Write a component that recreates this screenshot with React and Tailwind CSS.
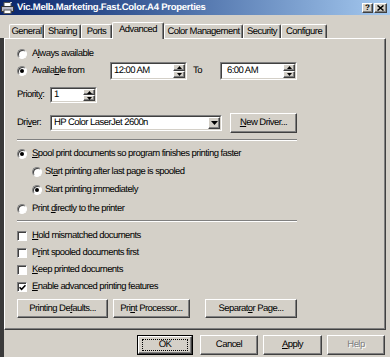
import React from "react";

// classic 3d borders
const raised =
  "border border-t-white border-l-white border-r-[#404040] border-b-[#404040] shadow-[inset_-1px_-1px_0_#808080]";

const U = ({ children }) => (
  <span className="underline decoration-1 underline-offset-[1px]">{children}</span>
);

const Button = ({ className = "", children }) => (
  <div className={`flex items-center justify-center bg-[#d4d0c8] ${raised} ${className}`}>
    {children}
  </div>
);

const Sunken = ({ className = "", children }) => (
  <div className={`border border-t-[#808080] border-l-[#808080] border-r-white border-b-white ${className}`}>
    <div className="w-full h-full border border-t-[#404040] border-l-[#404040] border-r-[#d4d0c8] border-b-[#d4d0c8] bg-white flex items-center">
      {children}
    </div>
  </div>
);

const Up = () => (
  <svg width="5" height="3" viewBox="0 0 5 3">
    <path d="M2.5 0 5 3H0z" fill="#000" />
  </svg>
);
const Down = () => (
  <svg width="5" height="3" viewBox="0 0 5 3">
    <path d="M0 0h5L2.5 3z" fill="#000" />
  </svg>
);

const Spinner = () => (
  <div className="ml-auto flex flex-col h-full w-[12px]">
    <Button className="flex-1">
      <Up />
    </Button>
    <Button className="flex-1">
      <Down />
    </Button>
  </div>
);

const Radio = ({ on }) => (
  <span className="w-[10px] h-[10px] shrink-0 rounded-full bg-white border border-t-[#808080] border-l-[#808080] border-r-white border-b-white shadow-[inset_1px_1px_0_#404040] flex items-center justify-center">
    {on && <span className="w-[4px] h-[4px] rounded-full bg-black" />}
  </span>
);

const Check = ({ on }) => (
  <span className="w-[10px] h-[10px] shrink-0 bg-white border border-t-[#808080] border-l-[#808080] border-r-white border-b-white shadow-[inset_1px_1px_0_#404040] flex items-center justify-center">
    {on && (
      <svg width="7" height="7" viewBox="0 0 7 7">
        <path d="M0.5 3.2 2.6 5.3 6.5 1.2" stroke="#000" strokeWidth="1.6" fill="none" />
      </svg>
    )}
  </span>
);

const Sep = ({ className = "" }) => (
  <div className={`w-[280px] h-[2px] border-t border-t-[#808080] border-b border-b-white ${className}`} />
);

const tabs = [
  { label: "General", w: "w-[35px]" },
  { label: "Sharing", w: "w-[37px]" },
  { label: "Ports", w: "w-[31px]" },
  { label: "Advanced", w: "w-[52px]", active: true },
  { label: "Color Management", w: "w-[79px]" },
  { label: "Security", w: "w-[38px]" },
  { label: "Configure", w: "w-[46px]" },
];

export default function App() {
  return (
    <div className="w-[390px] h-[357px] overflow-hidden bg-[#d4d0c8] flex flex-col text-[9.5px] tracking-[-0.55px] leading-none whitespace-nowrap text-black [text-rendering:geometricPrecision] font-['Liberation_Sans',Arial,sans-serif]">
      {/* title bar */}
      <div className="h-[15px] shrink-0 flex items-center bg-linear-to-r from-[#0a246a] to-[#a6caf0] pl-[1px] pr-[3px]">
        <svg width="13" height="12" viewBox="0 0 13 12" className="shrink-0">
          <rect x="3" y="0.5" width="7" height="5" fill="#fff" stroke="#555" />
          <rect x="0.5" y="4.5" width="12" height="5" fill="#b8b8c8" stroke="#333" />
          <rect x="3" y="8" width="7" height="3.5" fill="#fff" stroke="#555" />
          <path d="M9 1l2-1" stroke="#fff" />
        </svg>
        <span className="ml-[3px] text-white font-bold text-[9.5px] tracking-[-0.25px]">
          Vic.Melb.Marketing.Fast.Color.A4 Properties
        </span>
        <div className="ml-auto flex gap-[1px] tracking-normal">
          <Button className="w-[11px] h-[10px] font-bold text-[8px]">?</Button>
          <Button className="w-[13px] h-[10px]">
            <svg width="7" height="6" viewBox="0 0 7 6">
              <path d="M0.5 0.5 6.5 5.5M6.5 0.5 0.5 5.5" stroke="#000" strokeWidth="1.5" />
            </svg>
          </Button>
        </div>
      </div>

      {/* tabs */}
      <div className="mt-[7px] h-[16px] shrink-0 flex items-end pl-[9px]">
        {tabs.map((t) =>
          t.active ? (
            <div
              key={t.label}
              className={`${t.w} h-[17px] -mb-px relative z-10 bg-[#d4d0c8] rounded-t-[2px] border-l border-t border-r border-l-white border-t-white border-r-[#404040] shadow-[inset_-1px_0_0_#808080] flex items-center justify-center pb-[2px]`}
            >
              {t.label}
            </div>
          ) : (
            <div
              key={t.label}
              className={`${t.w} h-[14px] rounded-t-[2px] border-l border-t border-r border-l-white border-t-white border-r-[#404040] shadow-[inset_-1px_0_0_#808080] flex items-center justify-center`}
            >
              {t.label}
            </div>
          )
        )}
      </div>

      <div className="flex-1 flex">
        <div className="w-[4px] shrink-0 bg-[#3a3a3a]" />
        <div className="flex-1 flex flex-col">
          {/* panel */}
          <div className="mr-[4px] h-[292px] flex flex-col border border-t-white border-l-white border-r-[#404040] border-b-[#404040] shadow-[inset_-1px_-1px_0_#808080] pt-[7px] pl-[12px]">
            <div className="h-[16px] flex items-center gap-[5px]">
              <Radio />
              <span>
                A<U>l</U>ways available
              </span>
            </div>

            <div className="h-[18px] flex items-center">
              <div className="w-[93px] flex items-center gap-[5px]">
                <Radio on />
                <span>
                  Availa<U>b</U>le from
                </span>
              </div>
              <Sunken className="w-[77px] h-[18px]">
                <span className="pl-[2px]">12:00 AM</span>
                <Spinner />
              </Sunken>
              <span className="ml-[6px] w-[27px]">To</span>
              <Sunken className="w-[77px] h-[18px]">
                <span className="pl-[5px]">6:00 AM</span>
                <Spinner />
              </Sunken>
            </div>

            <div className="mt-[7px] h-[16px] flex items-center">
              <span className="w-[33px]">
                Priorit<U>y</U>:
              </span>
              <Sunken className="w-[47px] h-[16px]">
                <span className="pl-[2px]">1</span>
                <Spinner />
              </Sunken>
            </div>

            <div className="mt-[10px] h-[20px] flex items-center">
              <span className="w-[33px]">
                Dri<U>v</U>er:
              </span>
              <Sunken className="w-[172px] h-[16px]">
                <span className="pl-[2px]">HP Color LaserJet 2600n</span>
                <Button className="ml-auto w-[12px] h-full">
                  <svg width="7" height="4" viewBox="0 0 7 4">
                    <path d="M0 0h7L3.5 4z" fill="#000" />
                  </svg>
                </Button>
              </Sunken>
              <Button className="ml-[8px] w-[67px] h-[20px]">
                <span>
                  <U>N</U>ew Driver...
                </span>
              </Button>
            </div>

            <Sep className="mt-[6px]" />

            <div className="mt-[5px] h-[16px] flex items-center gap-[5px]">
              <Radio on />
              <span>
                <U>S</U>pool print documents so program finishes printing faster
              </span>
            </div>
            <div className="mt-[2px] h-[16px] flex items-center gap-[3px] pl-[15px]">
              <Radio />
              <span>
                St<U>a</U>rt printing after last page is spooled
              </span>
            </div>
            <div className="mt-[2px] h-[16px] flex items-center gap-[3px] pl-[15px]">
              <Radio on />
              <span>
                Start printing <U>i</U>mmediately
              </span>
            </div>
            <div className="mt-[3px] h-[16px] flex items-center gap-[5px]">
              <Radio />
              <span>
                Print <U>d</U>irectly to the printer
              </span>
            </div>

            <Sep className="mt-[3px]" />

            <div className="mt-[6px] h-[16px] flex items-center gap-[5px]">
              <Check />
              <span>
                <U>H</U>old mismatched documents
              </span>
            </div>
            <div className="mt-[1px] h-[16px] flex items-center gap-[5px]">
              <Check />
              <span>
                P<U>r</U>int spooled documents first
              </span>
            </div>
            <div className="mt-[1px] h-[16px] flex items-center gap-[5px]">
              <Check />
              <span>
                <U>K</U>eep printed documents
              </span>
            </div>
            <div className="mt-[1px] h-[16px] flex items-center gap-[5px]">
              <Check on />
              <span>
                <U>E</U>nable advanced printing features
              </span>
            </div>

            <div className="mt-[4px] h-[19px] flex">
              <Button className="w-[91px] h-full">
                <span>
                  Printing De<U>f</U>aults...
                </span>
              </Button>
              <Button className="ml-[5px] w-[77px] h-full">
                <span>
                  Pri<U>n</U>t Processor...
                </span>
              </Button>
              <Button className="ml-[15px] w-[92px] h-full">
                <span>
                  Separat<U>o</U>r Page...
                </span>
              </Button>
            </div>
          </div>

          {/* dialog buttons */}
          <div className="mt-[5px] h-[20px] flex justify-end pr-[5px]">
            <div className="w-[56px] h-full border border-black">
              <Button className="w-full h-full">
                <div className="w-[46px] h-[12px] border border-dotted border-black flex items-center justify-center">
                  OK
                </div>
              </Button>
            </div>
            <Button className="ml-[7px] w-[58px] h-full">Cancel</Button>
            <Button className="ml-[5px] w-[59px] h-full">
              <span>
                <U>A</U>pply
              </span>
            </Button>
            <Button className="ml-[5px] w-[58px] h-full text-[#808080] [text-shadow:1px_1px_0_#fff]">
              Help
            </Button>
          </div>
        </div>
      </div>
    </div>
  );
}
